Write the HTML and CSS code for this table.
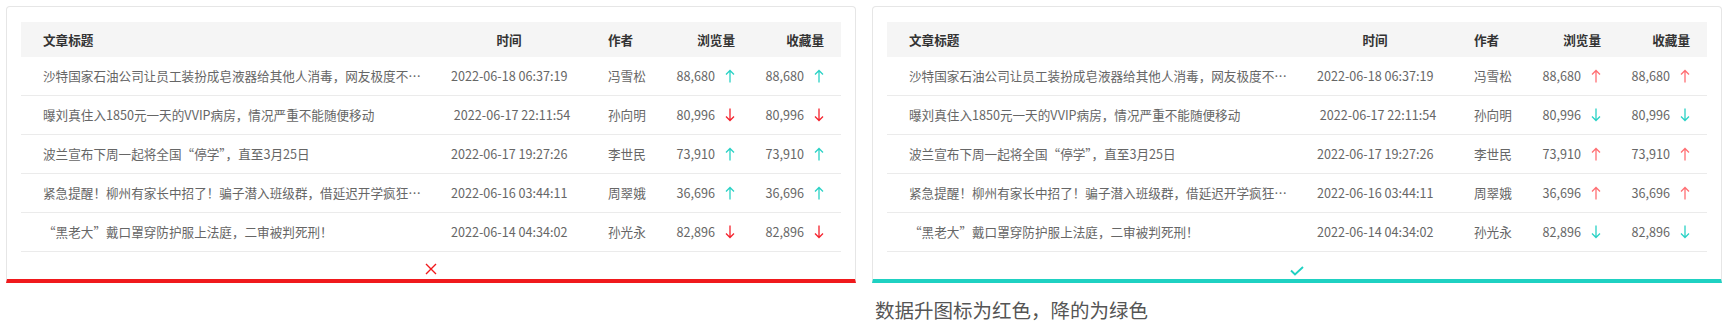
FILE: index.html
```html
<!DOCTYPE html>
<html lang="zh-CN">
<head>
<meta charset="utf-8">
<title>数据表对比</title>
<link rel="stylesheet" href="styles.css">
</head>
<body>
<div class="page">
  <div class="col">
    <div class="card card-bad">
      <div class="table">
        <div class="row head">
          <div class="c-title">文章标题</div>
          <div class="c-time">时间</div>
          <div class="c-author">作者</div>
          <div class="c-num">浏览量</div>
          <div class="c-num2">收藏量</div>
        </div>
        <div class="row">
          <div class="c-title" title="沙特国家石油公司让员工装扮成皂液器给其他人消毒，网友极度不适">沙特国家石油公司让员工装扮成皂液器给其他人消毒，网友极度不适：太恶心了</div>
          <div class="c-time">2022-06-18 06:37:19</div>
          <div class="c-author">冯雪松</div>
          <div class="c-num">88,680<svg class="arr up-g" viewBox="0 0 10 14"><path d="M5 1.5V13.5M1 5.5L5 1.5L9 5.5"/></svg></div>
          <div class="c-num2">88,680<svg class="arr up-g" viewBox="0 0 10 14"><path d="M5 1.5V13.5M1 5.5L5 1.5L9 5.5"/></svg></div>
        </div>
        <div class="row">
          <div class="c-title">曝刘真住入1850元一天的VVIP病房，情况严重不能随便移动</div>
          <div class="c-time">&nbsp;2022-06-17 22:11:54</div>
          <div class="c-author">孙向明</div>
          <div class="c-num">80,996<svg class="arr down-r" viewBox="0 0 10 14"><path d="M5 0.5V12.5M1 8.5L5 12.5L9 8.5"/></svg></div>
          <div class="c-num2">80,996<svg class="arr down-r" viewBox="0 0 10 14"><path d="M5 0.5V12.5M1 8.5L5 12.5L9 8.5"/></svg></div>
        </div>
        <div class="row">
          <div class="c-title">波兰宣布下周一起将全国“停学”，直至3月25日</div>
          <div class="c-time">2022-06-17 19:27:26</div>
          <div class="c-author">李世民</div>
          <div class="c-num">73,910<svg class="arr up-g" viewBox="0 0 10 14"><path d="M5 1.5V13.5M1 5.5L5 1.5L9 5.5"/></svg></div>
          <div class="c-num2">73,910<svg class="arr up-g" viewBox="0 0 10 14"><path d="M5 1.5V13.5M1 5.5L5 1.5L9 5.5"/></svg></div>
        </div>
        <div class="row">
          <div class="c-title">紧急提醒！柳州有家长中招了！骗子潜入班级群，借延迟开学疯狂敛财</div>
          <div class="c-time">2022-06-16 03:44:11</div>
          <div class="c-author">周翠娥</div>
          <div class="c-num">36,696<svg class="arr up-g" viewBox="0 0 10 14"><path d="M5 1.5V13.5M1 5.5L5 1.5L9 5.5"/></svg></div>
          <div class="c-num2">36,696<svg class="arr up-g" viewBox="0 0 10 14"><path d="M5 1.5V13.5M1 5.5L5 1.5L9 5.5"/></svg></div>
        </div>
        <div class="row">
          <div class="c-title">“黑老大”戴口罩穿防护服上法庭，二审被判死刑！</div>
          <div class="c-time">2022-06-14 04:34:02</div>
          <div class="c-author">孙光永</div>
          <div class="c-num">82,896<svg class="arr down-r" viewBox="0 0 10 14"><path d="M5 0.5V12.5M1 8.5L5 12.5L9 8.5"/></svg></div>
          <div class="c-num2">82,896<svg class="arr down-r" viewBox="0 0 10 14"><path d="M5 0.5V12.5M1 8.5L5 12.5L9 8.5"/></svg></div>
        </div>
      </div>
      <div class="foot">
        <svg class="mark-x" viewBox="0 0 12 12"><path d="M1 1L11 11M11 1L1 11"/></svg>
      </div>
    </div>
  </div>

  <div class="col">
    <div class="card card-good">
      <div class="table">
        <div class="row head">
          <div class="c-title">文章标题</div>
          <div class="c-time">时间</div>
          <div class="c-author">作者</div>
          <div class="c-num">浏览量</div>
          <div class="c-num2">收藏量</div>
        </div>
        <div class="row">
          <div class="c-title">沙特国家石油公司让员工装扮成皂液器给其他人消毒，网友极度不适：太恶心了</div>
          <div class="c-time">2022-06-18 06:37:19</div>
          <div class="c-author">冯雪松</div>
          <div class="c-num">88,680<svg class="arr up-r" viewBox="0 0 10 14"><path d="M5 1.5V13.5M1 5.5L5 1.5L9 5.5"/></svg></div>
          <div class="c-num2">88,680<svg class="arr up-r" viewBox="0 0 10 14"><path d="M5 1.5V13.5M1 5.5L5 1.5L9 5.5"/></svg></div>
        </div>
        <div class="row">
          <div class="c-title">曝刘真住入1850元一天的VVIP病房，情况严重不能随便移动</div>
          <div class="c-time">&nbsp;2022-06-17 22:11:54</div>
          <div class="c-author">孙向明</div>
          <div class="c-num">80,996<svg class="arr down-g" viewBox="0 0 10 14"><path d="M5 0.5V12.5M1 8.5L5 12.5L9 8.5"/></svg></div>
          <div class="c-num2">80,996<svg class="arr down-g" viewBox="0 0 10 14"><path d="M5 0.5V12.5M1 8.5L5 12.5L9 8.5"/></svg></div>
        </div>
        <div class="row">
          <div class="c-title">波兰宣布下周一起将全国“停学”，直至3月25日</div>
          <div class="c-time">2022-06-17 19:27:26</div>
          <div class="c-author">李世民</div>
          <div class="c-num">73,910<svg class="arr up-r" viewBox="0 0 10 14"><path d="M5 1.5V13.5M1 5.5L5 1.5L9 5.5"/></svg></div>
          <div class="c-num2">73,910<svg class="arr up-r" viewBox="0 0 10 14"><path d="M5 1.5V13.5M1 5.5L5 1.5L9 5.5"/></svg></div>
        </div>
        <div class="row">
          <div class="c-title">紧急提醒！柳州有家长中招了！骗子潜入班级群，借延迟开学疯狂敛财</div>
          <div class="c-time">2022-06-16 03:44:11</div>
          <div class="c-author">周翠娥</div>
          <div class="c-num">36,696<svg class="arr up-r" viewBox="0 0 10 14"><path d="M5 1.5V13.5M1 5.5L5 1.5L9 5.5"/></svg></div>
          <div class="c-num2">36,696<svg class="arr up-r" viewBox="0 0 10 14"><path d="M5 1.5V13.5M1 5.5L5 1.5L9 5.5"/></svg></div>
        </div>
        <div class="row">
          <div class="c-title">“黑老大”戴口罩穿防护服上法庭，二审被判死刑！</div>
          <div class="c-time">2022-06-14 04:34:02</div>
          <div class="c-author">孙光永</div>
          <div class="c-num">82,896<svg class="arr down-g" viewBox="0 0 10 14"><path d="M5 0.5V12.5M1 8.5L5 12.5L9 8.5"/></svg></div>
          <div class="c-num2">82,896<svg class="arr down-g" viewBox="0 0 10 14"><path d="M5 0.5V12.5M1 8.5L5 12.5L9 8.5"/></svg></div>
        </div>
      </div>
      <div class="foot">
        <svg class="mark-ok" viewBox="0 0 14 10"><path d="M1 4.5L5 8.5L13 1"/></svg>
      </div>
    </div>
    <p class="caption">数据升图标为红色，降的为绿色</p>
  </div>
</div>
</body>
</html>
```

FILE: styles.css
```css
* { box-sizing: border-box; }

html, body {
  margin: 0;
  padding: 0;
  background: #ffffff;
}

body {
  font-family: "Noto Sans CJK SC", "Noto Sans", sans-serif;
  font-size: 12.6px;
  color: #666666;
}

.page {
  display: flex;
  align-items: flex-start;
  gap: 16px;
  padding: 6px;
}

.col {
  display: flex;
  flex-direction: column;
  width: 850px;
}

.card {
  width: 850px;
  border: 1px solid #e6e6e6;
  border-radius: 4px 4px 0 0;
  padding: 15px 14px 0 14px;
  background: #ffffff;
}

.card-bad { border-bottom: 4px solid #f0191c; }
.card-good { border-bottom: 4px solid #1fd1c2; }

.table {
  width: 820px;
}

.row {
  display: grid;
  grid-template-columns: 410px 156px 84px 76px 94px;
  align-items: center;
  height: 39px;
  border-bottom: 1px solid #ebebeb;
  line-height: 20px;
}

.row.head {
  height: 35px;
  background: #f5f5f5;
  border-bottom: none;
  color: #333333;
  font-weight: 700;
}

.c-title {
  padding-left: 22px;
  padding-right: 8px;
  white-space: nowrap;
  overflow: hidden;
  text-overflow: ellipsis;
}

.c-time {
  padding-left: 20px;
  white-space: nowrap;
}

.head .c-time {
  padding-left: 0;
  text-align: center;
}

.c-author {
  padding-left: 21px;
}

.c-num, .c-num2 {
  display: flex;
  justify-content: flex-end;
  align-items: center;
  white-space: nowrap;
}

.c-num { padding-right: 12px; }
.c-num2 { padding-right: 17px; }

.arr {
  width: 10px;
  height: 14px;
  margin-left: 10px;
  fill: none;
  stroke-width: 1.3;
  stroke-linecap: butt;
}

.up-g path, .down-g path { stroke: #2ad2c5; }
.down-r path { stroke: #f5222d; }
.up-r path { stroke: #ff6f73; }

.foot {
  height: 27px;
  display: flex;
  justify-content: center;
  align-items: flex-start;
  padding-top: 11px;
}

.mark-x {
  width: 12px;
  height: 12px;
  fill: none;
  stroke: #f0191c;
  stroke-width: 1.4;
}

.mark-ok {
  width: 14px;
  height: 10px;
  margin-top: 3px;
  fill: none;
  stroke: #1fd1c2;
  stroke-width: 1.9;
}

.caption {
  margin: 13px 0 0 3px;
  font-size: 19.5px;
  line-height: 28px;
  color: #555555;
}
```
